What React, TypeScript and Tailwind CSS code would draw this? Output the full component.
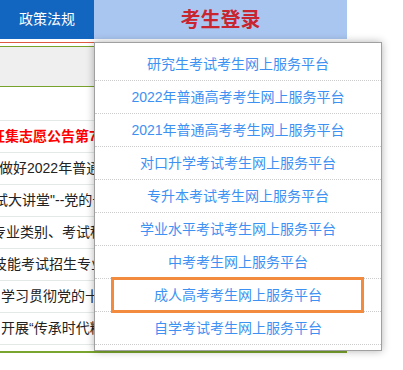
const news = [
  { text: '', red: false, shift: 0 },
  { text: '征集志愿公告第7号', red: true, shift: -9 },
  { text: '做好2022年普通高校招生录取工作的通知', red: false, shift: -1 },
  { text: '试大讲堂"--党的十九届六中全会精神', red: false, shift: -6 },
  { text: '专业类别、考试科目及分值', red: false, shift: -8 },
  { text: '技能考试招生专业目录', red: false, shift: -7 },
  { text: '学习贯彻党的十九届六中全会精神', red: false, shift: 1 },
  { text: '开展“传承时代精神”主题活动', red: false, shift: 1 },
]

const platforms = [
  '研究生考试考生网上服务平台',
  '2022年普通高考考生网上服务平台',
  '2021年普通高考考生网上服务平台',
  '对口升学考试考生网上服务平台',
  '专升本考试考生网上服务平台',
  '学业水平考试考生网上服务平台',
  '中考考生网上服务平台',
  '成人高考考生网上服务平台',
  '自学考试考生网上服务平台',
]

export default function App() {
  return (
    <div className="relative w-[403px] h-[370px] overflow-hidden bg-white font-['Liberation_Sans','Noto_Sans_CJK_SC',sans-serif]">
      <div className="w-[347px]">
        <div className="flex h-[39px]">
          <div className="w-[94px] flex items-center justify-center bg-[#1266bf] text-white text-[14px]">政策法规</div>
          <div className="flex-1 flex items-center justify-center bg-[#a9c6f0] text-[#c9252f] text-[20px] font-bold">考生登录</div>
        </div>
        <div className="h-[3px]" />
        <div className="h-px bg-[#de5a40]" />
        <div className="h-[3px]" />
        <div className="h-[41px] bg-[#efefef] border-y border-[#77a22c]" />
        <div className="pt-[2px]">
          {news.map((n, i) => (
            <div key={i} className="h-[32px] border-b border-[#e3e9e7] flex items-center overflow-hidden whitespace-nowrap">
              <span
                className={n.red ? 'text-[14px] font-bold text-[#ff0000]' : 'text-[14px] text-[#222]'}
                style={{ marginLeft: n.shift }}
              >
                {n.text}
              </span>
            </div>
          ))}
        </div>
        <div className="mt-[6px] h-[2px] bg-[#7aa52f]" />
      </div>

      <div className="absolute left-[94px] top-[42px] w-[288px] bg-white border border-[#a0a0a0] shadow-[0_0_8px_rgba(0,0,0,0.3)] pt-[5px] pb-[5px]">
        {platforms.map((p, i) => (
          <div key={p} className="relative h-[33px] border-b border-dotted border-[#cccccc] flex items-center justify-center text-[14px] text-[#3d91f2]">
            {p}
            {i === 7 && (
              <span className="absolute left-[16px] right-[17px] -top-[2px] -bottom-[2px] border-[3px] border-[#f28b3d]" />
            )}
          </div>
        ))}
      </div>
    </div>
  )
}
